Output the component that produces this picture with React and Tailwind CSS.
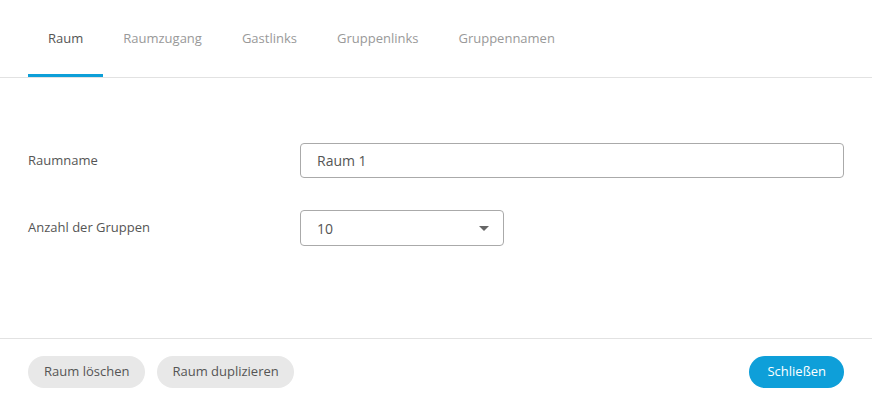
import { useState } from "react";

const tabs = ["Raum", "Raumzugang", "Gastlinks", "Gruppenlinks", "Gruppennamen"];

function App() {
  const [active, setActive] = useState(0);
  const [name, setName] = useState("Raum 1");

  return (
    <div className="w-[872px] h-[401px] bg-white flex flex-col text-[13px] text-[#555]" style={{ fontFamily: '"Open Sans", "Noto Sans", sans-serif' }}>
      {/* Tabs */}
      <div className="flex px-[28px] border-b border-[#e2e2e2] h-[78px]">
        {tabs.map((tab, i) => (
          <button
            key={tab}
            onClick={() => setActive(i)}
            className={
              i === active
                ? "px-[20px] h-full flex items-center border-b-[3px] border-[#0d9fd8] pt-[3px] text-[#555]"
                : "px-[20px] h-full flex items-center border-b-[3px] border-transparent pt-[3px] text-[#999]"
            }
          >
            {tab}
          </button>
        ))}
      </div>

      {/* Form */}
      <div className="flex-1 px-[28px] pt-[65px] flex flex-col gap-[32px]">
        <div className="flex items-center">
          <label className="w-[272px]">Raumname</label>
          <input
            value={name}
            onChange={(e) => setName(e.target.value)}
            className="flex-1 h-[35px] border border-[#aaa] rounded-[4px] px-[16px] text-[14px] text-[#555] outline-none"
          />
        </div>
        <div className="flex items-center">
          <label className="w-[272px]">Anzahl der Gruppen</label>
          <div className="w-[204px] h-[36px] border border-[#aaa] rounded-[4px] pl-[16px] pr-[14px] flex items-center justify-between text-[14px]">
            <span>10</span>
            <svg width="10" height="5" viewBox="0 0 10 5">
              <path d="M0 0 L10 0 L5 5 Z" fill="#666" />
            </svg>
          </div>
        </div>
      </div>

      {/* Footer */}
      <div className="border-t border-[#e2e2e2] h-[63px] px-[28px] flex items-center justify-between pt-[3px]">
        <div className="flex gap-[12px]">
          <button className="h-[32px] px-[16px] rounded-full bg-[#e8e8e8] text-[#555]">Raum löschen</button>
          <button className="h-[32px] px-[15px] rounded-full bg-[#e8e8e8] text-[#555]">Raum duplizieren</button>
        </div>
        <button className="h-[32px] px-[18px] rounded-full bg-[#0e9fd9] text-white">Schließen</button>
      </div>
    </div>
  );
}

export default App;
